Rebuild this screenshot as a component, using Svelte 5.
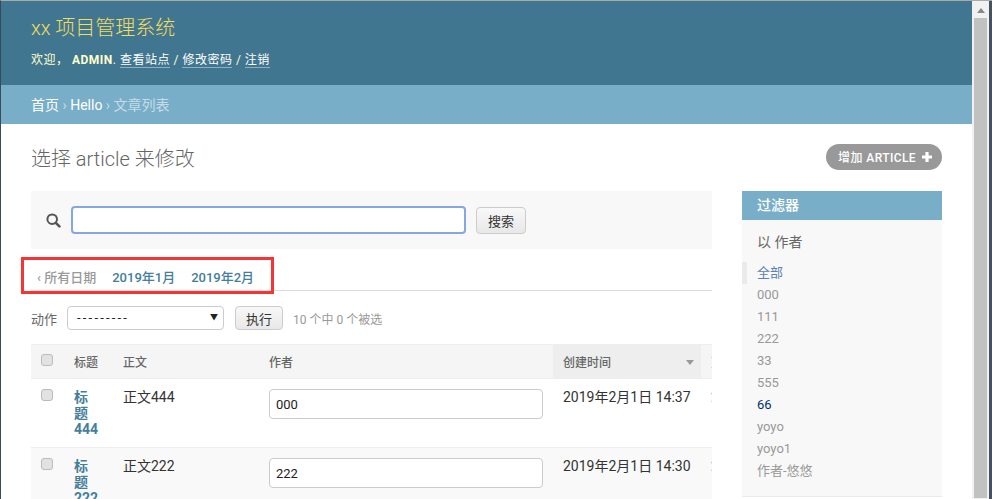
<script>
	const filters = ["全部", "000", "111", "222", "33", "555", "66", "yoyo", "yoyo1", "作者-悠悠"];
	const rows = [
		{ num: "444", body: "正文444", author: "000", time: "2019年2月1日 14:37" },
		{ num: "222", body: "正文222", author: "222", time: "2019年2月1日 14:30" },
	];
</script>

<div class="window">
	<div class="page">
		<header class="header">
			<h1 class="brand">xx 项目管理系统</h1>
			<div class="tools">
				欢迎， <strong>ADMIN</strong>. <a href="#a">查看站点</a> / <a href="#a">修改密码</a> / <a href="#a">注销</a>
			</div>
		</header>
		<nav class="crumbs">
			<a href="#a">首页</a> › <a href="#a">Hello</a> › 文章列表
		</nav>

		<main class="content">
			<div class="title-row">
				<h2>选择 article 来修改</h2>
				<a class="add" href="#a">增加 ARTICLE
					<svg width="12" height="12" viewBox="0 0 12 12"><path d="M4.4 1h3.2v3.4H11v3.2H7.6V11H4.4V7.6H1V4.4h3.4z" fill="#fff"/></svg>
				</a>
			</div>

			<div class="columns">
				<section class="changelist">
					<div class="search">
						<svg width="15" height="15" viewBox="0 0 15 15"><circle cx="6.2" cy="6.2" r="4.8" fill="none" stroke="#555" stroke-width="2"/><path d="M9.8 9.8l3.6 3.6" stroke="#555" stroke-width="2.6" stroke-linecap="round"/></svg>
						<input class="search-input" type="text" />
						<button class="btn search-btn">搜索</button>
					</div>

					<div class="dates">
						<span class="back">‹ 所有日期</span>
						<a href="#a">2019年1月</a>
						<a href="#a">2019年2月</a>
						<div class="redbox"></div>
					</div>

					<div class="actions">
						<span>动作</span>
						<div class="select">---------<span class="caret">▼</span></div>
						<button class="btn run-btn">执行</button>
						<span class="counter">10 个中 0 个被选</span>
					</div>

					<div class="results">
						<table>
							<colgroup>
								<col style="width:33px" />
								<col style="width:49px" />
								<col style="width:146px" />
								<col style="width:294px" />
								<col style="width:148px" />
								<col style="width:60px" />
							</colgroup>
							<thead>
								<tr>
									<th><input type="checkbox" /></th>
									<th>标题</th>
									<th>正文</th>
									<th>作者</th>
									<th class="sorted">创建时间<span class="sort"></span></th>
									<th>更新</th>
								</tr>
							</thead>
							<tbody>
								{#each rows as row, i}
									<tr class:alt={i % 2 === 1}>
										<td><input type="checkbox" /></td>
										<td><a class="row-title" href="#a">标题{row.num}</a></td>
										<td>{row.body}</td>
										<td><input class="author" type="text" value={row.author} /></td>
										<td>{row.time}</td>
										<td>2</td>
									</tr>
								{/each}
							</tbody>
						</table>
					</div>
				</section>

				<aside class="filter">
					<h3>过滤器</h3>
					<h4>以 作者</h4>
					<ul>
						{#each filters as f, i}
							<li class:selected={i === 0} class:hover={f === "66"}>{f}</li>
						{/each}
					</ul>
				</aside>
			</div>
		</main>
	</div>

	<div class="scrollbar">
		<div class="arrow"></div>
		<div class="thumb"></div>
	</div>
	<div class="desktop"></div>
</div>

<style>
	:global(body) {
		margin: 0;
		overflow: hidden;
	}
	.window {
		display: flex;
		height: 499px;
		width: 992px;
		overflow: hidden;
		box-sizing: border-box;
		border-top: 1px solid #aaa;
		border-left: 1px solid #3a4a58;
		background: #fff;
		font-family: Roboto, "Noto Sans CJK SC", sans-serif;
		font-size: 13px;
		color: #333;
	}
	.page {
		width: 971px;
		flex: none;
		overflow: hidden;
	}
	.scrollbar {
		width: 17px;
		flex: none;
		box-sizing: border-box;
		padding: 0 2px;
		background: #f1f1f1;
	}
	.arrow {
		width: 0;
		height: 0;
		margin: 7px auto 5px;
		border: 4px solid transparent;
		border-top: 0;
		border-bottom: 5px solid #888;
	}
	.thumb {
		height: 480px;
		background: #c1c1c1;
	}
	.desktop {
		flex: 1;
		background: #46535e;
	}
	a {
		text-decoration: none;
	}

	.header {
		height: 84px;
		box-sizing: border-box;
		padding: 15px 30px 0;
		background: #417690;
		color: #ffc;
	}
	.brand {
		margin: 0;
		font-size: 20px;
		line-height: 24px;
		font-weight: 300;
		color: #f5dd5d;
	}
	.tools {
		margin-top: 12px;
		font-size: 12px;
		line-height: 16px;
		letter-spacing: 0.5px;
	}
	.tools strong {
		font-weight: 700;
	}
	.tools a {
		color: #fff;
		border-bottom: 1px solid #8fb0c2;
	}
	.crumbs {
		height: 39px;
		box-sizing: border-box;
		padding: 1px 30px 0;
		line-height: 38px;
		font-size: 14px;
		background: #79aec8;
		color: #c4dce8;
	}
	.crumbs a {
		color: #fff;
	}

	.content {
		padding: 20px 30px 0;
	}
	.title-row {
		display: flex;
		justify-content: space-between;
		align-items: center;
		height: 26px;
		margin-bottom: 21px;
	}
	h2 {
		margin: 0;
		padding-top: 4px;
		font-size: 20px;
		line-height: 28px;
		font-weight: 300;
		color: #666;
	}
	.add {
		display: flex;
		align-items: center;
		gap: 5px;
		height: 26px;
		box-sizing: border-box;
		padding: 0 9px 2px 12px;
		border-radius: 15px;
		background: #999;
		color: #fff;
		font-size: 12px;
		font-weight: 500;
		letter-spacing: 0.4px;
	}
	.add svg {
		margin-top: 1px;
	}

	.columns {
		display: flex;
		gap: 30px;
		align-items: flex-start;
	}
	.changelist {
		width: 681px;
		flex: none;
	}
	.search {
		display: flex;
		align-items: center;
		height: 58px;
		box-sizing: border-box;
		padding-left: 15px;
		background: #f8f8f8;
	}
	.search-input {
		width: 395px;
		height: 28px;
		box-sizing: border-box;
		margin-left: 10px;
		border: 2px solid #86a6e0;
		border-radius: 4px;
		background: #fff;
		outline: none;
	}
	.btn {
		height: 27px;
		box-sizing: border-box;
		padding: 0 10px;
		border: 1px solid #ccc;
		border-radius: 4px;
		background: linear-gradient(#f8f8f8, #e8e8e8);
		color: #333;
		font-family: inherit;
		font-size: 13px;
	}
	.search-btn {
		width: 50px;
		margin-left: 10px;
	}

	.dates {
		position: relative;
		display: flex;
		gap: 16px;
		height: 42px;
		box-sizing: border-box;
		padding: 20px 0 0 6px;
		line-height: 18px;
		font-size: 13px;
		font-weight: 500;
		border-bottom: 1px solid #ddd;
	}
	.back {
		color: #999;
	}
	.dates a {
		color: #447e9b;
	}
	.redbox {
		position: absolute;
		left: -10px;
		top: 8px;
		width: 253px;
		height: 37px;
		box-sizing: border-box;
		border: 3px solid #f33535;
	}

	.actions {
		display: flex;
		align-items: center;
		height: 24px;
		margin-top: 15px;
		margin-bottom: 14px;
		color: #666;
	}
	.select {
		position: relative;
		width: 157px;
		height: 24px;
		box-sizing: border-box;
		margin-left: 10px;
		padding-left: 9px;
		border: 1px solid #ccc;
		border-radius: 4px;
		line-height: 22px;
		color: #222;
		letter-spacing: 2.2px;
	}
	.caret {
		position: absolute;
		right: 5px;
		top: 0;
		font-size: 8px;
		letter-spacing: 0;
		color: #222;
	}
	.run-btn {
		width: 48px;
		height: 24px;
		padding: 0;
		margin-left: 11px;
	}
	.counter {
		margin-left: 10px;
		font-size: 12px;
		color: #999;
	}

	.results {
		overflow: hidden;
	}
	table {
		width: 730px;
		table-layout: fixed;
		border-collapse: collapse;
	}
	th {
		height: 33px;
		padding: 0 0 0 10px;
		text-align: left;
		font-size: 12px;
		font-weight: 500;
		color: #666;
		white-space: nowrap;
		background: #f5f5f5;
		border-top: 1px solid #eee;
		border-bottom: 1px solid #eee;
	}
	th.sorted {
		position: relative;
		background: #eee;
	}
	th input[type="checkbox"] {
		margin-top: -3px;
	}
	.sort {
		position: absolute;
		right: 7px;
		top: 15px;
		border: 4px solid transparent;
		border-top: 5px solid #999;
		border-bottom: 0;
	}
	td {
		height: 69px;
		box-sizing: border-box;
		padding: 10px 10px 0;
		vertical-align: top;
		line-height: 16px;
		color: #333;
		border-bottom: 1px solid #eee;
		font-size: 14px;
		white-space: nowrap;
	}
	tr.alt td {
		background: #f9f9f9;
	}
	input[type="checkbox"] {
		appearance: none;
		display: block;
		width: 12px;
		height: 12px;
		margin: 0;
		border: 1px solid #bbb;
		border-radius: 3px;
		background: #e2e2e2;
	}
	.row-title {
		display: block;
		width: 27px;
		font-weight: 700;
		color: #447e9b;
		white-space: normal;
	}
	.author {
		display: block;
		width: 274px;
		height: 30px;
		box-sizing: border-box;
		padding: 0 6px;
		border: 1px solid #ccc;
		border-radius: 4px;
		font-family: inherit;
		font-size: 13px;
		color: #222;
	}

	.filter {
		width: 200px;
		flex: none;
		background: #f8f8f8;
	}
	.filter h3 {
		margin: 0;
		height: 29px;
		padding-left: 15px;
		line-height: 29px;
		font-size: 14px;
		font-weight: 500;
		color: #fff;
		background: #79aec8;
	}
	.filter h4 {
		margin: 0;
		padding: 13px 15px 0;
		font-size: 14px;
		line-height: 18px;
		font-weight: 400;
		color: #666;
	}
	.filter ul {
		margin: 11px 0 0;
		padding: 0 0 14px;
		list-style: none;
		border-bottom: 1px solid #eaeaea;
	}
	.filter li {
		height: 22px;
		box-sizing: border-box;
		padding-left: 15px;
		line-height: 22px;
		color: #999;
	}
	.filter li.selected {
		padding-left: 10px;
		border-left: 5px solid #eaeaea;
		color: #5b80b2;
	}
	.filter li.hover {
		color: #036;
	}
</style>
